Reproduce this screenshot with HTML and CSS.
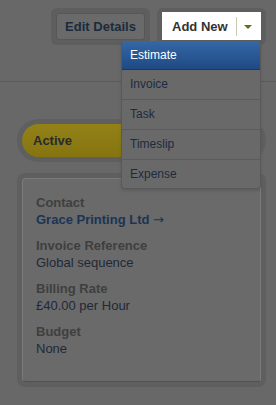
FILE: index.html
```html
<!DOCTYPE html>
<html>
<head>
    <title>Project</title>
    <meta name="viewport" content="width=device-width, initial-scale=1.0">
    <link rel="stylesheet" href="styles.css">
</head>
<body>
    <div class="topbar">
        <div class="actions">
            <span class="halo">
                <button class="btn-edit">Edit Details</button>
            </span>
            <span class="halo halo-add">
                <span class="btn-add">
                    <span class="add-label">Add New</span>
                    <span class="add-sep"></span>
                    <span class="caret"></span>
                </span>
                <ul class="menu">
                    <li class="active">Estimate</li>
                    <li>Invoice</li>
                    <li>Task</li>
                    <li>Timeslip</li>
                    <li>Expense</li>
                </ul>
            </span>
        </div>
    </div>

    <div class="content">
        <div class="status-halo">
            <div class="status">Active</div>
        </div>

        <div class="card-halo">
            <div class="card">
                <div class="field">
                    <div class="label">Contact</div>
                    <div class="value link">Grace Printing Ltd <span class="arrow">&rarr;</span></div>
                </div>
                <div class="field">
                    <div class="label">Invoice Reference</div>
                    <div class="value">Global sequence</div>
                </div>
                <div class="field">
                    <div class="label">Billing Rate</div>
                    <div class="value">&pound;40.00 per Hour</div>
                </div>
                <div class="field">
                    <div class="label">Budget</div>
                    <div class="value">None</div>
                </div>
            </div>
        </div>
    </div>
</body>
</html>
```

FILE: styles.css
```css
body {
    margin: 0;
    font-family: "Liberation Sans", Arial, sans-serif;
    background: #686868;
    height: 405px;
    overflow: hidden;
}
.topbar {
    height: 81px;
    border-bottom: 1px solid #5a5a5a;
}
.actions {
    display: flex;
    justify-content: flex-end;
    gap: 7px;
    padding: 8px 10px 0 0;
}
.halo {
    display: block;
    padding: 5px;
    background: #5e5e5e;
    border-radius: 6px;
}
.halo-add { position: relative; }
.btn-edit {
    display: block;
    height: 27px;
    width: 89px;
    padding: 0;
    font-family: inherit;
    font-size: 13px;
    font-weight: bold;
    color: #1c2a3e;
    background: #6a6a6a;
    border: 1px solid #575757;
    border-radius: 3px;
}
.btn-add {
    display: flex;
    align-items: center;
    height: 28px;
    margin-top: -1px;
    width: 99px;
    box-sizing: border-box;
    padding: 0 11px 0 10px;
    background: #fff;
    font-size: 13px;
    font-weight: bold;
    color: #333;
    white-space: nowrap;
}
.add-label { flex-shrink: 0; }
.add-sep {
    flex-shrink: 0;
    width: 1px;
    height: 19px;
    margin: 0 7px 0 8px;
    background: #c9c9b4;
}
.caret {
    flex-shrink: 0;
    width: 0;
    height: 0;
    border-left: 4px solid transparent;
    border-right: 4px solid transparent;
    border-top: 4px solid #6a6a1e;
    margin-top: 2px;
}
.menu {
    position: absolute;
    top: 33px;
    right: 5px;
    width: 140px;
    box-sizing: border-box;
    margin: 0;
    padding: 0;
    list-style: none;
    background: #696969;
    border: 1px solid #595959;
    border-top: none;
    border-radius: 0 0 4px 4px;
    box-shadow: 0 2px 3px rgba(0, 0, 0, 0.12);
}
.menu li {
    height: 29px;
    line-height: 29px;
    padding-left: 8px;
    font-size: 12px;
    color: #1d2b3f;
    border-bottom: 1px solid #5b5b5b;
}
.menu li:last-child { border-bottom: none; height: 28px; }
.menu li.active {
    height: 28px;
    line-height: 28px;
    color: #fff;
    background: linear-gradient(#3468a6, #1f4a84);
    border-bottom: 1px solid #17396a;
}
.content {
    padding: 37px 10px 0 17px;
}
.status-halo {
    padding: 5px;
    background: #5f5f5f;
    border-radius: 22px;
}
.status {
    height: 33px;
    line-height: 33px;
    padding-left: 11px;
    border-radius: 17px;
    background: linear-gradient(#938118, #867410);
    font-size: 13px;
    font-weight: bold;
    color: #272a2e;
}
.card-halo {
    margin-top: 11px;
    padding: 5px;
    background: #5f5f5f;
    border-radius: 8px;
}
.card {
    background: #6a6a6a;
    border: 1px solid #7a7a7a;
    border-bottom-color: #505050;
    border-radius: 4px;
    padding: 15px 13px 24px;
}
.field { margin-bottom: 9px; }
.field:last-child { margin-bottom: 0; }
.label {
    font-size: 13px;
    line-height: 17px;
    font-weight: bold;
    color: #3f3f3f;
}
.value {
    font-size: 13px;
    line-height: 17px;
    color: #1f2937;
}
.value.link {
    font-weight: bold;
    color: #1b3454;
}
.arrow {
    font-family: "DejaVu Sans", sans-serif;
    font-weight: normal;
    font-size: 13px;
}
```
